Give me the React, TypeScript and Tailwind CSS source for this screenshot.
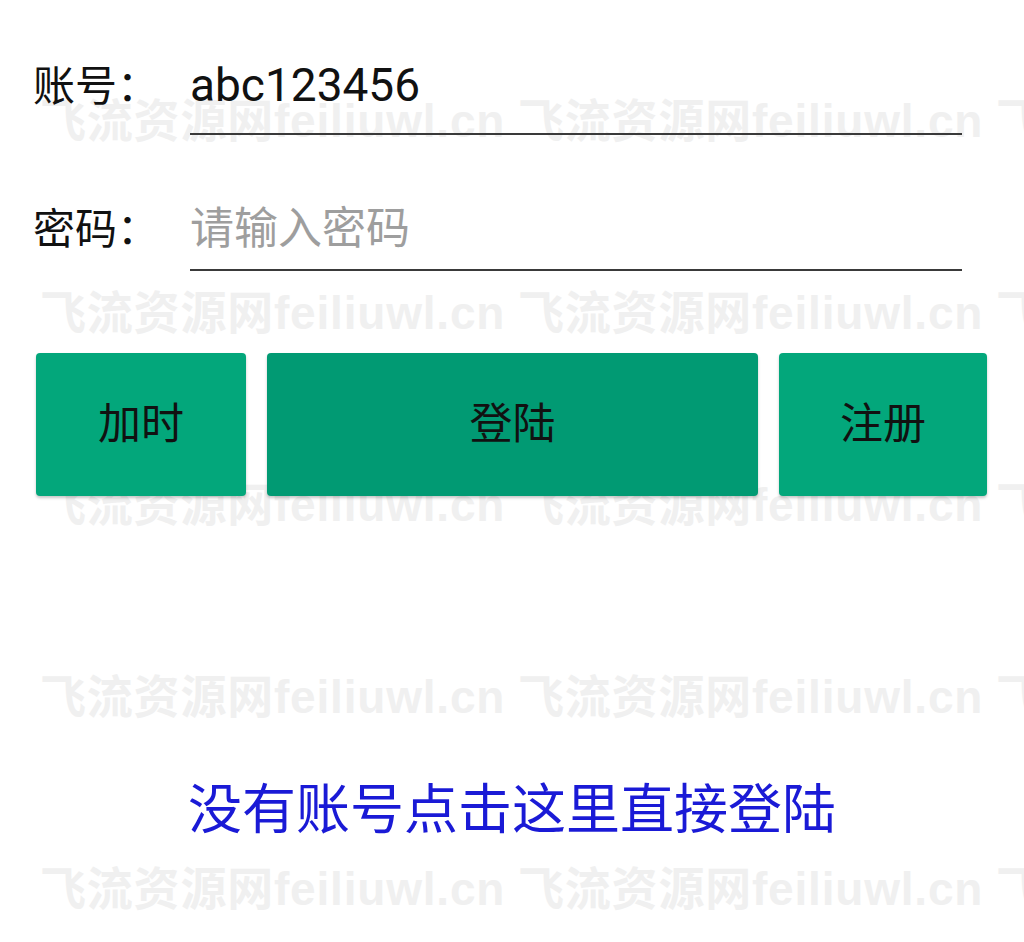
import React from "react";

const FONT = { fontFamily: 'Roboto, "Noto Sans CJK SC", sans-serif' };
const WM_FONT = { fontFamily: '"Liberation Sans", "Noto Sans CJK SC", sans-serif' };

const rows = [98, 290, 482, 674, 866];
const cols = [40, 518, 996];

function Watermark() {
  return (
    <div className="absolute inset-0 pointer-events-none select-none">
      {rows.map((top) =>
        cols.map((left) => (
          <span
            key={`${top}-${left}`}
            className="absolute whitespace-nowrap text-[46px] leading-[46px] font-bold tracking-[0.8px] text-[#f0f0f0]"
            style={{ ...WM_FONT, top, left }}
          >
            飞流资源网feiliuwl.cn
          </span>
        ))
      )}
    </div>
  );
}

export default function App() {
  return (
    <div className="relative w-[1024px] h-[942px] overflow-hidden bg-white" style={FONT}>
      <Watermark />
      <div className="relative flex flex-col">
        {/* Account row */}
        <div className="flex items-baseline pl-[33px] pt-[57px]">
          <div className="w-[157px] shrink-0 text-[42px] leading-[56px] text-[#111]">账号：</div>
          <div className="w-[772px] border-b-2 border-[#3a3a3a] pb-[20px] text-[46px] leading-[56px] text-[#111]">
            abc123456
          </div>
        </div>
        {/* Password row */}
        <div className="flex items-baseline pl-[33px] mt-[66px]">
          <div className="w-[157px] shrink-0 text-[42px] leading-[56px] text-[#111]">密码：</div>
          <div className="w-[772px] border-b-2 border-[#3a3a3a] pb-[12px] text-[44px] leading-[56px] text-[#9e9e9e]">
            请输入密码
          </div>
        </div>
        {/* Buttons */}
        <div className="flex pl-[36px] gap-[21px] mt-[82px]">
          <button className="w-[210px] h-[143px] rounded-[4px] bg-[#03a77b] shadow-[0_2px_3px_rgba(0,0,0,0.22)] flex items-center justify-center text-[43px] leading-none text-[#111]">
            加时
          </button>
          <button className="w-[491px] h-[143px] rounded-[4px] bg-[#019a73] shadow-[0_2px_3px_rgba(0,0,0,0.22)] flex items-center justify-center text-[43px] leading-none text-[#111]">
            登陆
          </button>
          <button className="w-[208px] h-[143px] rounded-[4px] bg-[#03a77b] shadow-[0_2px_3px_rgba(0,0,0,0.22)] flex items-center justify-center text-[43px] leading-none text-[#111]">
            注册
          </button>
        </div>
        {/* Link */}
        <div className="mt-[283px] text-center text-[54px] leading-[64px] text-[#1a1ad6]">
          没有账号点击这里直接登陆
        </div>
      </div>
    </div>
  );
}
